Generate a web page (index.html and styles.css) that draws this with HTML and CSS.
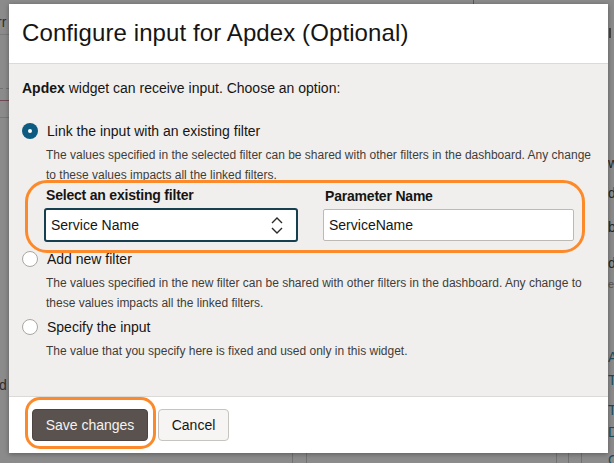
FILE: index.html
```html
<!DOCTYPE html>
<html lang="en">
<head>
<meta charset="utf-8">
<title>Configure input for Apdex</title>
<link rel="stylesheet" href="styles.css">
</head>
<body>
<div class="backdrop">
  <span class="bg-txt bg-rr">rr</span>
  <span class="bg-line bg-l1"></span>
  <span class="bg-line bg-dash"></span>
  <span class="bg-line bg-red1"></span>
  <span class="bg-line bg-l2"></span>
  <span class="bg-txt bg-d">d</span>
  <span class="bg-vline bg-v1"></span>
  <span class="bg-vline bg-v2"></span>
  <span class="bg-vline bg-v3"></span>
  <span class="bg-vline bg-v4"></span>
  <span class="bg-vline bg-v5"></span>
  <span class="bg-vline bg-vred"></span>
  <span class="bg-bar"></span>
  <div class="bg-right">
    <span class="r-w">w</span>
    <span class="r-d1">d</span>
    <span class="r-b">b</span>
    <span class="r-d2">d</span>
    <span class="r-e">e</span>
    <span class="r-a link">A</span>
    <span class="r-t1 link">T</span>
    <span class="r-t2 link">T</span>
    <span class="r-dd link">D</span>
    <span class="r-c link">C</span>
  </div>
</div>

<div class="dialog">
  <header class="dlg-head">
    <h1 class="dlg-title">Configure input for Apdex (Optional)</h1>
  </header>
  <div class="dlg-body">
    <p class="intro"><b>Apdex</b> widget can receive input. Choose an option:</p>

    <div class="option opt-first">
      <div class="radio-row"><span class="radio checked"></span><span class="radio-label">Link the input with an existing filter</span></div>
      <p class="desc">The values specified in the selected filter can be shared with other filters in the dashboard. Any change to these values impacts all the linked filters.</p>
      <div class="fields">
        <div class="field field-select">
          <div class="flabel">Select an existing filter</div>
          <div class="select">
            <span>Service Name</span>
            <svg class="chev" width="12" height="17" viewBox="0 0 12 17"><path d="M1 6 L6 1 L11 6" fill="none" stroke="#2b2a28" stroke-width="1.4"/><path d="M1 11 L6 16 L11 11" fill="none" stroke="#2b2a28" stroke-width="1.4"/></svg>
          </div>
        </div>
        <div class="field field-input">
          <div class="flabel">Parameter Name</div>
          <div class="input">ServiceName</div>
        </div>
      </div>
    </div>

    <div class="option opt-second">
      <div class="radio-row"><span class="radio"></span><span class="radio-label">Add new filter</span></div>
      <p class="desc">The values specified in the new filter can be shared with other filters in the dashboard. Any change to these values impacts all the linked filters.</p>
    </div>

    <div class="option opt-third">
      <div class="radio-row"><span class="radio"></span><span class="radio-label">Specify the input</span></div>
      <p class="desc">The value that you specify here is fixed and used only in this widget.</p>
    </div>
  </div>
  <footer class="dlg-foot">
    <button class="btn btn-primary">Save changes</button>
    <button class="btn btn-secondary">Cancel</button>
  </footer>
</div>
</body>
</html>
```
FILE: styles.css
```css
html, body {
  margin: 0;
  padding: 0;
}
body {
  width: 614px;
  height: 463px;
  overflow: hidden;
  position: relative;
  background: #8d8d8d;
  font-family: "Liberation Sans", Arial, sans-serif;
  color: #161513;
}

/* dimmed page behind the dialog */
.backdrop {
  position: absolute;
  inset: 0;
  background: #8b8b8b;
}
.bg-txt {
  position: absolute;
  font-size: 14px;
  color: #2e2e2e;
  line-height: 16px;
}
.bg-rr { left: -3px; top: 14px; }
.bg-d { left: -1px; top: 377px; }
.bg-line {
  position: absolute;
  left: 0;
  width: 9px;
  height: 1px;
  background: #7a7a7a;
}
.bg-l1 { top: 34px; }
.bg-dash { top: 88px; background: repeating-linear-gradient(90deg, #727272 0 3px, transparent 3px 6px); }
.bg-red1 { top: 100px; background: #6e4a52; }
.bg-l2 { top: 117px; background: #787878; }
.bg-vline {
  position: absolute;
  width: 1px;
  background: #727272;
}
.bg-v1 { left: 292px; top: 453px; height: 10px; }
.bg-v2 { left: 306px; top: 453px; height: 10px; }
.bg-v3 { left: 556px; top: 453px; height: 10px; }
.bg-v4 { left: 568px; top: 453px; height: 10px; }
.bg-v5 { left: 581px; top: 453px; height: 10px; }
.bg-vred { left: 473px; top: 0; height: 4px; background: #7a4a56; }
.bg-bar {
  position: absolute;
  left: 609px;
  top: 28px;
  width: 2px;
  height: 10px;
  background: #454545;
}
.bg-right span {
  position: absolute;
  left: 608px;
  font-size: 14px;
  line-height: 16px;
  color: #262626;
}
.bg-right .link { color: #1f4a5c; }
.r-w { top: 155px; }
.r-d1 { top: 185px; }
.r-b { top: 219px; }
.r-d2 { top: 255px; }
.r-e { top: 276px; font-size: 11px !important; color: #555 !important; }
.r-a { top: 349px; }
.r-t1 { top: 372px; }
.r-t2 { top: 402px; }
.r-dd { top: 424px; }
.r-c { top: 452px; }

/* dialog */
.dialog {
  position: absolute;
  left: 9px;
  top: 4px;
  width: 599px;
  height: 449px;
  background: #fff;
  box-shadow: 0 1px 5px rgba(0, 0, 0, 0.35);
  display: flex;
  flex-direction: column;
}
.dlg-head {
  height: 59px;
  border-bottom: 1px solid #dcdad7;
  display: flex;
  align-items: center;
  padding-left: 13px;
}
.dlg-title {
  margin: 0;
  font-size: 24px;
  font-weight: normal;
  line-height: 30px;
  letter-spacing: 0.1px;
  color: #161513;
  position: relative;
  top: -1px;
}
.dlg-body {
  height: 332px;
  box-sizing: border-box;
  background: #f1efed;
  padding: 14px 8px 0 13px;
}
.intro {
  margin: 0;
  font-size: 14px;
  line-height: 20px;
}
.intro b { font-weight: bold; }

.option { display: flex; flex-direction: column; }
.opt-first { margin-top: 23px; }
.opt-second { margin-top: 7px; }
.opt-third { margin-top: 4px; }

.radio-row {
  display: flex;
  align-items: center;
  height: 20px;
}
.radio {
  width: 16px;
  height: 16px;
  box-sizing: border-box;
  border-radius: 50%;
  border: 1px solid #a9a6a2;
  background: #fff;
  flex: none;
  position: relative;
}
.radio.checked {
  border: none;
  background: #0d5b80;
}
.radio.checked::after {
  content: "";
  position: absolute;
  left: 6px;
  top: 6px;
  width: 4px;
  height: 4px;
  border-radius: 50%;
  background: #fff;
}
.radio-label {
  margin-left: 9px;
  font-size: 14px;
  line-height: 20px;
}
.desc {
  margin: 4px 0 0 0;
  padding-left: 24px;
  font-size: 12px;
  line-height: 20px;
  color: #3f3d3a;
}

.fields {
  position: relative;
  margin-left: 22px;
  width: 530px;
  display: flex;
  gap: 25px;
  align-items: flex-end;
}
.fields::after {
  content: "";
  position: absolute;
  left: -19px;
  right: -11px;
  top: -5px;
  bottom: -11px;
  border: 3px solid #fd8a2a;
  border-radius: 22px;
  pointer-events: none;
}
.field { display: flex; flex-direction: column; }
.field-select { width: 254px; }
.field-input { width: 251px; }
.flabel {
  font-size: 14px;
  font-weight: bold;
  line-height: 20px;
  letter-spacing: -0.2px;
  padding-left: 2px;
  margin-bottom: 3px;
}
.select {
  height: 34px;
  box-sizing: border-box;
  border: 2px solid #163f50;
  border-radius: 3px;
  background: #fff;
  display: flex;
  align-items: center;
  justify-content: space-between;
  padding: 0 13px 0 5px;
  font-size: 14px;
}
.chev { display: block; }
.input {
  height: 32px;
  margin-bottom: 1px;
  box-sizing: border-box;
  border: 1px solid #bdbab6;
  border-radius: 2px;
  background: #fff;
  display: flex;
  align-items: center;
  padding-left: 5px;
  font-size: 14px;
}

.dlg-foot {
  flex: 1;
  border-top: 1px solid #dcdad7;
  background: #fff;
  display: flex;
  align-items: flex-start;
  gap: 10px;
  padding: 12px 0 0 23px;
}
.btn {
  height: 32px;
  box-sizing: border-box;
  border-radius: 4px;
  font-family: "Liberation Sans", Arial, sans-serif;
  font-size: 14px;
  padding: 0;
  white-space: nowrap;
  text-align: center;
  cursor: pointer;
}
.btn-primary {
  position: relative;
  width: 116px;
  background: #5a524e;
  border: 1px solid #4b4440;
  color: #f5f3f1;
}
.btn-primary::after {
  content: "";
  position: absolute;
  left: -8px;
  right: -9px;
  top: -13px;
  bottom: -9px;
  border: 3px solid #fd8a2a;
  border-radius: 15px;
}
.btn-secondary {
  width: 71px;
  background: #f6f5f3;
  border: 1px solid #c7c4bf;
  color: #161513;
}
```
